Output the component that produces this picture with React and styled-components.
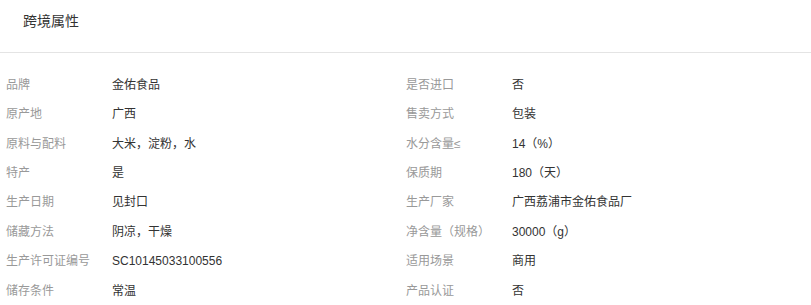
import React from "react";
import styled, { createGlobalStyle } from "styled-components";

const Global = createGlobalStyle`
  html, body { margin: 0; padding: 0; background: #fff; }
  body { font-family: "Liberation Sans", "Noto Sans CJK SC", sans-serif; }
`;

const Panel = styled.section`
  width: 811px;
  background: #fff;
`;

const Header = styled.div`
  height: 53px;
  display: flex;
  align-items: center;
  padding: 0 0 12px 23px;
  box-sizing: border-box;
  border-bottom: 1px solid #e4e4e4;
  font-size: 14px;
  color: #333;
`;

const Grid = styled.div`
  display: grid;
  grid-template-columns: 400px 1fr;
  grid-auto-rows: 29.43px;
  padding: 17px 0 0 6px;
`;

const Item = styled.div`
  display: flex;
  align-items: center;
  font-size: 12px;
  line-height: 16px;
  white-space: nowrap;
`;

const Label = styled.span`
  width: 106px;
  flex: none;
  color: #999;
`;

const Value = styled.span`
  color: #333;
`;

const left = [
  ["品牌", "金佑食品"],
  ["原产地", "广西"],
  ["原料与配料", "大米，淀粉，水"],
  ["特产", "是"],
  ["生产日期", "见封口"],
  ["储藏方法", "阴凉，干燥"],
  ["生产许可证编号", "SC10145033100556"],
  ["储存条件", "常温"],
];

const right = [
  ["是否进口", "否"],
  ["售卖方式", "包装"],
  ["水分含量≤", "14（%）"],
  ["保质期", "180（天）"],
  ["生产厂家", "广西荔浦市金佑食品厂"],
  ["净含量（规格）", "30000（g）"],
  ["适用场景", "商用"],
  ["产品认证", "否"],
];

export default function App() {
  const items = [];
  left.forEach((l, i) => {
    items.push(l);
    items.push(right[i]);
  });
  return (
    <>
      <Global />
      <Panel>
        <Header>跨境属性</Header>
        <Grid>
          {items.map(([k, v], i) => (
            <Item key={i}>
              <Label>{k}</Label>
              <Value>{v}</Value>
            </Item>
          ))}
        </Grid>
      </Panel>
    </>
  );
}
